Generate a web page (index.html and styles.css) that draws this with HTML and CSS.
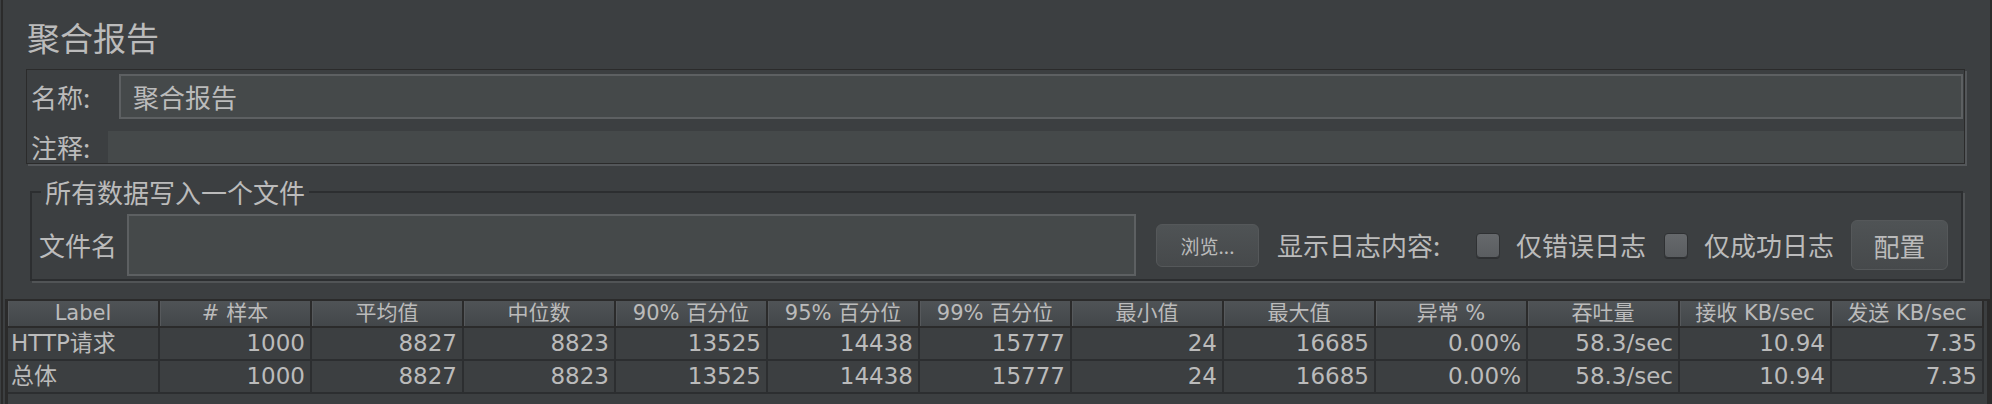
FILE: index.html
```html
<!DOCTYPE html>
<html lang="zh-CN">
<head>
<meta charset="utf-8">
<title>聚合报告</title>
<link rel="stylesheet" href="styles.css">
</head>
<body>
<div class="frame">
  <h1 class="title">聚合报告</h1>
  <div class="name-panel">
    <div class="row row-name">
      <span class="lbl lbl-name">名称:</span>
      <div class="field field-name">聚合报告</div>
    </div>
    <div class="row row-comment">
      <span class="lbl lbl-comment">注释:</span>
      <div class="field field-comment"></div>
    </div>
  </div>
  <fieldset class="group">
    <legend class="group-title">所有数据写入一个文件</legend>
    <div class="file-row">
      <span class="lbl lbl-file">文件名</span>
      <div class="field field-file"></div>
      <button class="btn btn-browse">浏览...</button>
      <span class="lbl lbl-show">显示日志内容:</span>
      <span class="check check-1"></span>
      <span class="lbl lbl-opt">仅错误日志</span>
      <span class="check check-2"></span>
      <span class="lbl lbl-opt">仅成功日志</span>
      <button class="btn btn-config">配置</button>
    </div>
  </fieldset>
  <div class="table-pane">
    <table class="grid">
      <thead>
        <tr>
          <th>Label</th><th># 样本</th><th>平均值</th><th>中位数</th><th>90% 百分位</th><th>95% 百分位</th><th>99% 百分位</th><th>最小值</th><th>最大值</th><th>异常 %</th><th>吞吐量</th><th>接收 KB/sec</th><th>发送 KB/sec</th>
        </tr>
      </thead>
      <tbody>
        <tr>
          <td class="c-label">HTTP请求</td><td>1000</td><td>8827</td><td>8823</td><td>13525</td><td>14438</td><td>15777</td><td>24</td><td>16685</td><td>0.00%</td><td>58.3/sec</td><td>10.94</td><td>7.35</td>
        </tr>
        <tr>
          <td class="c-label">总体</td><td>1000</td><td>8827</td><td>8823</td><td>13525</td><td>14438</td><td>15777</td><td>24</td><td>16685</td><td>0.00%</td><td>58.3/sec</td><td>10.94</td><td>7.35</td>
        </tr>
      </tbody>
    </table>
  </div>
</div>
</body>
</html>
```
FILE: styles.css
```css
html, body {
  margin: 0;
  padding: 0;
  background: #3c3f41;
}
body {
  width: 1992px;
  height: 404px;
  overflow: hidden;
  font-family: "Noto Sans CJK SC", "Noto Sans", sans-serif;
  color: #bbbbbb;
}
.frame {
  box-sizing: border-box;
  width: 1991px;
  height: 404px;
  margin-left: 1px;
  border-left: 2px solid #2b2b2b;
  border-right: 2px solid #2b2b2b;
  overflow: hidden;
}
.title {
  margin: 21px 0 0 24px;
  font-size: 33px;
  line-height: 33px;
  font-weight: normal;
  color: #bbbbbb;
}
.name-panel {
  margin: 15px 25px 0 23px;
  padding: 4px 0 0 4px;
  border: 1px solid #2b2b2b;
  box-shadow: 2px 2px 0 #54575a;
}
.row {
  display: flex;
  align-items: center;
}
.lbl {
  font-size: 26px;
  line-height: 30px;
  white-space: nowrap;
  flex: none;
}
.lbl-name { width: 88px; }
.lbl-comment { width: 77px; }
.field {
  box-sizing: border-box;
  background: #45494a;
  flex: 1;
}
.field-name {
  height: 45px;
  border: 2px solid #5d6062;
  padding-left: 12px;
  font-size: 26px;
  line-height: 41px;
  margin-right: 1px;
}
.row-comment {
  margin-top: 12px;
}
.field-comment {
  height: 32px;
}
.group {
  margin: 15px 27px 0 27px;
  padding: 9px 10px 3px 7px;
  border: 2px solid #2c2e30;
  box-shadow: 2px 2px 0 #515456;
  min-width: 0;
}
.group-title {
  font-size: 26px;
  line-height: 26px;
  padding: 0 4px;
  margin-left: 2px;
}
.file-row {
  display: flex;
  align-items: center;
  height: 62px;
}
.lbl-file { width: 88px; }
.field-file {
  flex: none;
  width: 1009px;
  height: 62px;
  border: 2px solid #5d6062;
}
.btn {
  box-sizing: border-box;
  flex: none;
  padding: 0;
  font-family: "Noto Sans CJK SC", sans-serif;
  color: #bbbbbb;
  background: linear-gradient(#4f5355, #46494b);
  border: 1px solid #55585a;
  border-radius: 6px;
}
.btn-browse {
  width: 103px;
  height: 43px;
  margin-left: 20px;
  font-size: 19px;
}
.lbl-show {
  width: 199px;
  margin-left: 18px;
}
.check {
  box-sizing: border-box;
  flex: none;
  width: 24px;
  height: 25px;
  border-radius: 4px;
  border: 1px solid #2f3133;
  background: linear-gradient(#66696c, #5a5d60);
  box-shadow: 0 1px 0 #2e3032;
}
.check-2 { margin-left: 18px; }
.lbl-opt {
  margin-left: 16px;
  width: 130px;
}
.btn-config {
  width: 97px;
  height: 50px;
  margin-left: 17px;
  font-size: 26px;
}
.table-pane {
  margin: 18px 0 0 2px;
  height: 200px;
  border-top: 2px solid #2b2b2b;
  border-left: 3px solid #2b2b2b;
  border-right: 3px solid #2b2b2b;
}
.grid {
  table-layout: fixed;
  width: 1976px;
  border-collapse: separate;
  border-spacing: 0;
  font-family: "DejaVu Sans", "Noto Sans CJK SC", sans-serif;
  color: #bbbbbb;
}
.grid th {
  width: 152px;
  box-sizing: border-box;
  padding: 0;
  font-size: 21px;
  line-height: 25px;
  font-weight: normal;
  text-align: center;
  white-space: nowrap;
  overflow: hidden;
  background: linear-gradient(#4f5356, #43474a);
  border-bottom: 2px solid #2b2b2b;
  border-right: 2px solid #2b2b2b;
  box-shadow: inset 1px 0 0 #56595c;
}
.grid td {
  padding: 0 5px;
  font-size: 23px;
  line-height: 31px;
  text-align: right;
  white-space: nowrap;
  overflow: hidden;
  border-bottom: 2px solid #2c2e30;
  border-right: 2px solid #2c2e30;
}
.grid td.c-label {
  text-align: left;
  padding-left: 3px;
}
```
